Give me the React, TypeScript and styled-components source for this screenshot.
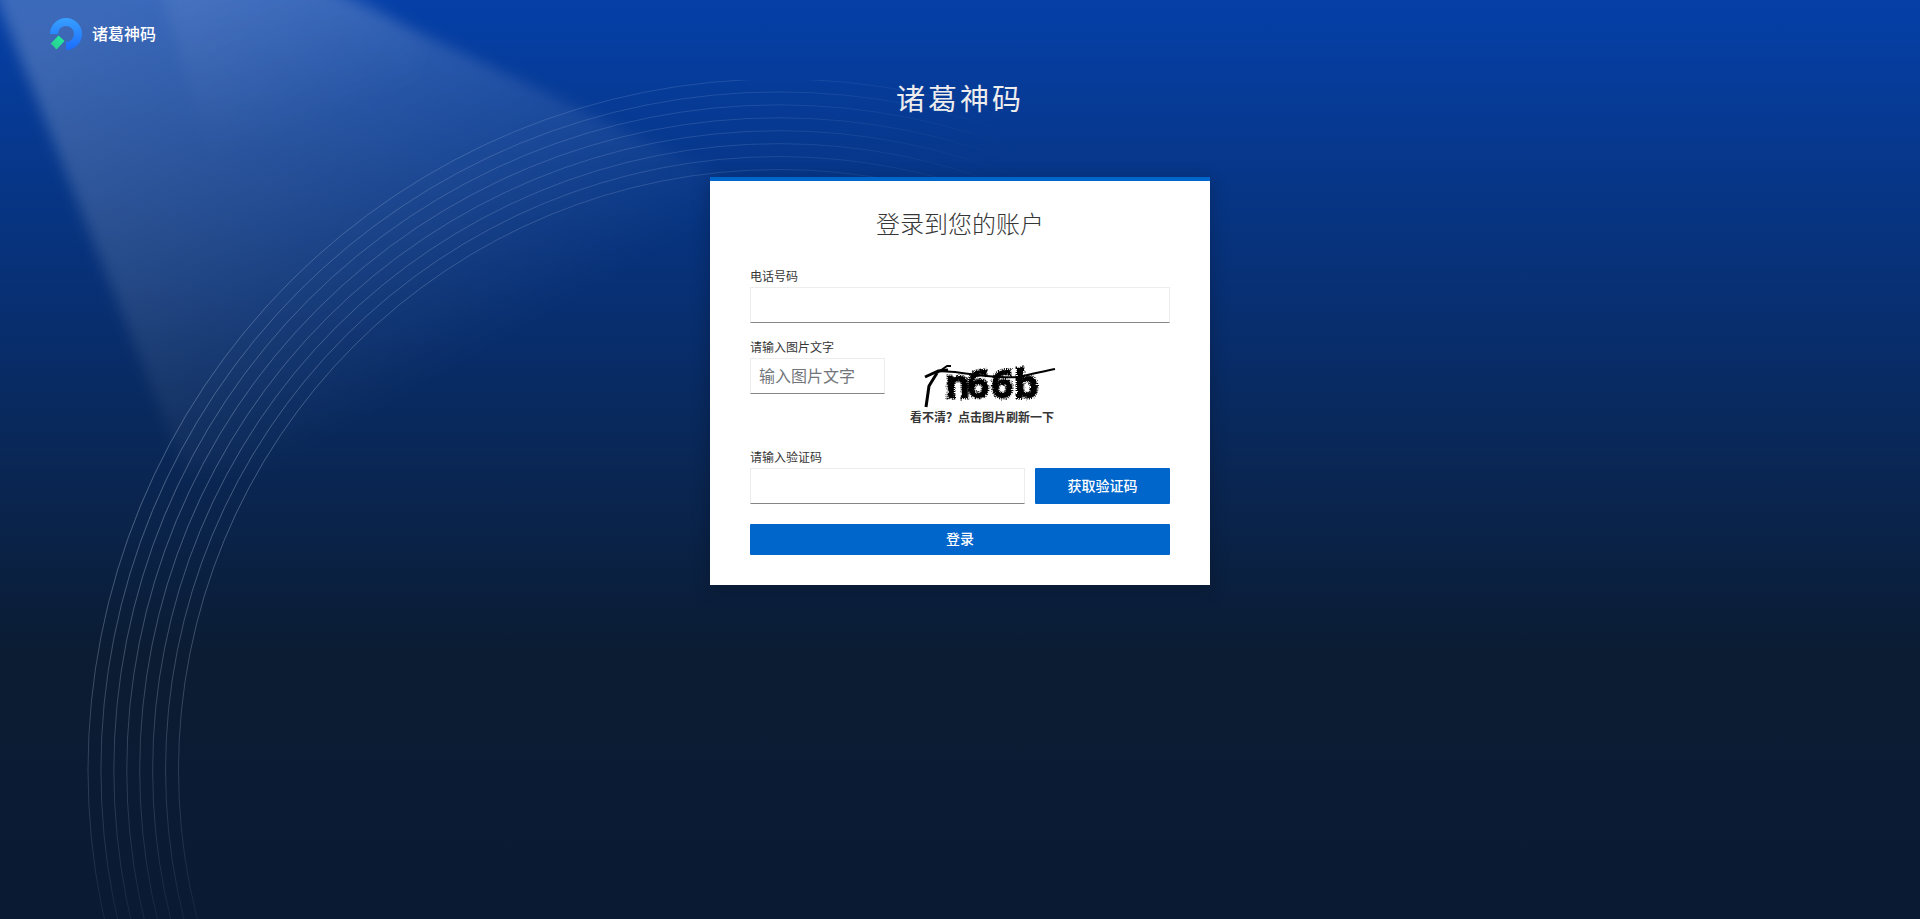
import React, { useState } from "react";
import styled, { createGlobalStyle } from "styled-components";

const GlobalStyle = createGlobalStyle`
  *, *::before, *::after { box-sizing: border-box; }
  html { height: 100%; }
  body {
    margin: 0;
    height: 100%;
    background: #0a1a33;
    color: #363636;
    font-family: "Open Sans", "Noto Sans CJK SC", sans-serif;
    font-size: 12px;
    line-height: 20px;
  }
  #root { height: 100%; }
`;

const Page = styled.div`
  position: relative;
  isolation: isolate;
  overflow: hidden;
  min-height: 100%;
  background: linear-gradient(180deg, #0540a8 0%, #0b1c33 71%, #0a1a33 100%);
`;

const Backdrop = styled.svg`
  position: absolute;
  top: 0;
  left: 0;
  z-index: -1;
  pointer-events: none;
`;

const Brand = styled.div`
  position: absolute;
  top: 18px;
  left: 50px;
  display: flex;
  align-items: center;
  gap: 10px;
  color: #fff;
  font-size: 16px;
  font-weight: 500;
  line-height: 32px;
`;

const Header = styled.header`
  padding: 80px 10px 59px;
  text-align: center;
`;

const SiteName = styled.h1`
  margin: 0;
  color: #ededed;
  font-size: 29px;
  font-weight: 400;
  line-height: 38px;
  letter-spacing: 3px;
`;

const Card = styled.main`
  width: 500px;
  max-width: 100%;
  margin: 0 auto;
  padding: 20px 40px 30px;
  border-top: 4px solid #06c;
  background: #fff;
  box-shadow: 0 4px 16px 2px rgba(3, 3, 3, 0.2);
`;

const CardTitle = styled.h2`
  margin: 0 0 20px;
  font-size: 24px;
  font-weight: 300;
  line-height: 46px;
  text-align: center;
`;

const Form = styled.form`
  display: flex;
  flex-direction: column;
`;

const Field = styled.div<{ $gap: number }>`
  display: flex;
  flex-direction: column;
  margin-bottom: ${(p) => p.$gap}px;
`;

const Label = styled.label`
  line-height: 20px;
`;

const Row = styled.div<{ $gap: number }>`
  display: flex;
  align-items: flex-start;
  gap: ${(p) => p.$gap}px;
`;

const TextInput = styled.input<{ $width?: string }>`
  width: ${(p) => p.$width ?? "100%"};
  flex: ${(p) => (p.$width ? "none" : "1 1 auto")};
  min-width: 0;
  height: 36px;
  padding: 0 8px;
  border: 1px solid #ededed;
  border-bottom-color: #868686;
  border-radius: 0;
  background: #fff;
  color: #151515;
  font-family: inherit;
  font-size: 16px;
  outline: none;

  &::placeholder {
    color: #72767b;
    opacity: 1;
  }
`;

const Captcha = styled.button`
  display: flex;
  flex-direction: column;
  align-items: flex-start;
  padding: 0;
  border: 0;
  background: none;
  color: inherit;
  font-family: inherit;
  font-size: 12px;
  font-weight: 600;
  line-height: 18px;
  cursor: pointer;
`;

const CaptchaImage = styled.svg`
  display: block;
`;

const Button = styled.button<{ $width?: string; $height: number }>`
  flex: none;
  width: ${(p) => p.$width ?? "100%"};
  height: ${(p) => p.$height}px;
  padding: 0 0 1px;
  border: 0;
  border-radius: 1px;
  background: #06c;
  color: #fff;
  font-family: inherit;
  font-size: 14px;
  font-weight: 500;
  line-height: 20px;
  cursor: pointer;
`;

const RINGS = Array.from({ length: 8 }, (_, i) => 600.5 + i * 12.93);

function Background() {
  return (
    <Backdrop width="1120" height="920" viewBox="0 0 1120 920" aria-hidden="true">
      <defs>
        <linearGradient id="beam" gradientUnits="userSpaceOnUse" x1="160" y1="-20" x2="400" y2="400">
          <stop offset="0" stopColor="#fff" stopOpacity="0.22" />
          <stop offset="0.5" stopColor="#fff" stopOpacity="0.12" />
          <stop offset="1" stopColor="#fff" stopOpacity="0" />
        </linearGradient>
        <linearGradient id="beamInner" gradientUnits="userSpaceOnUse" x1="220" y1="0" x2="270" y2="140">
          <stop offset="0" stopColor="#fff" stopOpacity="0.06" />
          <stop offset="1" stopColor="#fff" stopOpacity="0" />
        </linearGradient>
        <filter id="soft" x="-10%" y="-10%" width="120%" height="120%">
          <feGaussianBlur stdDeviation="7" />
        </filter>
        <linearGradient id="ringFadeX" gradientUnits="userSpaceOnUse" x1="90" y1="0" x2="1030" y2="0">
          <stop offset="0" stopColor="#fff" stopOpacity="1" />
          <stop offset="0.7" stopColor="#fff" stopOpacity="0.5" />
          <stop offset="1" stopColor="#fff" stopOpacity="0" />
        </linearGradient>
        <linearGradient id="ringStroke" gradientUnits="userSpaceOnUse" x1="0" y1="80" x2="0" y2="940">
          <stop offset="0" stopColor="#a9c2ea" stopOpacity="0.3" />
          <stop offset="0.5" stopColor="#b4c4dd" stopOpacity="0.4" />
          <stop offset="0.75" stopColor="#b4c4dd" stopOpacity="0.26" />
          <stop offset="1" stopColor="#b4c4dd" stopOpacity="0.06" />
        </linearGradient>
        <mask id="ringMask" maskUnits="userSpaceOnUse" x="0" y="80" width="1120" height="840">
          <rect x="0" y="80" width="1120" height="840" fill="url(#ringFadeX)" />
        </mask>
      </defs>
      <path d="M-15 -30 L185 470 L560 470 L790 210 L290 -30 Z" fill="url(#beam)" filter="url(#soft)" />
      <path d="M155 -30 L215 170 L420 170 L420 40 L340 -30 Z" fill="url(#beamInner)" filter="url(#soft)" />
      <g mask="url(#ringMask)" fill="none" stroke="url(#ringStroke)" strokeWidth="1">
        {RINGS.map((r) => (
          <circle key={r} cx="779" cy="770" r={r} />
        ))}
      </g>
    </Backdrop>
  );
}

function Logo() {
  return (
    <svg width="32" height="32" viewBox="0 0 32 32" aria-hidden="true">
      <defs>
        <linearGradient id="logoBlue" x1="0" y1="0" x2="0" y2="1">
          <stop offset="0" stopColor="#38a0ff" />
          <stop offset="1" stopColor="#1b6dff" />
        </linearGradient>
        <linearGradient id="logoGreen" x1="1" y1="0" x2="0" y2="1">
          <stop offset="0" stopColor="#20f0a0" />
          <stop offset="1" stopColor="#2cc98c" />
        </linearGradient>
      </defs>
      <path d="M0 16 A16 16 0 1 1 16 32 V24 A8 8 0 1 0 8 16 Z" fill="url(#logoBlue)" />
      <path d="M8.5 17.5 L14.5 23 L6.5 31.5 L0.8 25.5 Z" fill="url(#logoGreen)" />
    </svg>
  );
}

function CaptchaDrawing() {
  return (
    <CaptchaImage width="160" height="51" viewBox="0 0 160 51" role="img" aria-label="图片验证码">
      <defs>
        <filter id="rough" x="-10%" y="-20%" width="120%" height="140%">
          <feTurbulence type="fractalNoise" baseFrequency="0.4" numOctaves="2" seed="4" result="n" />
          <feDisplacementMap in="SourceGraphic" in2="n" scale="3" xChannelSelector="R" yChannelSelector="G" />
        </filter>
      </defs>
      <text
        x="35 57 81 104"
        y="40"
        filter="url(#rough)"
        fontFamily="'Open Sans', sans-serif"
        fontWeight="700"
        fontSize="39"
        stroke="#000"
        strokeWidth="3"
        strokeDasharray="1 1"
      >
        n66b
      </text>
      <g fill="none" stroke="#000" strokeLinejoin="round">
        <path d="M15 19 L28 13 L38 12" strokeWidth="3" />
        <path d="M27 15 L37 8 L41 8" strokeWidth="2" />
        <path d="M16 49 L19 28 L27 15" strokeWidth="3" />
        <path d="M28 13 L45 14 C72 18 92 20 107 19 C120 17 134 13 145 11" strokeWidth="2" />
      </g>
    </CaptchaImage>
  );
}

export default function App() {
  const [phone, setPhone] = useState("");
  const [picture, setPicture] = useState("");
  const [code, setCode] = useState("");

  return (
    <>
      <GlobalStyle />
      <Page>
        <Background />
        <Brand>
          <Logo />
          <span>诸葛神码</span>
        </Brand>
        <Header>
          <SiteName>诸葛神码</SiteName>
        </Header>
        <Card>
          <CardTitle>登录到您的账户</CardTitle>
          <Form onSubmit={(e) => e.preventDefault()}>
            <Field $gap={15}>
              <Label htmlFor="phone">电话号码</Label>
              <TextInput id="phone" type="tel" value={phone} onChange={(e) => setPhone(e.target.value)} />
            </Field>
            <Field $gap={21}>
              <Label htmlFor="picture">请输入图片文字</Label>
              <Row $gap={25}>
                <TextInput
                  id="picture"
                  $width="135px"
                  placeholder="输入图片文字"
                  value={picture}
                  onChange={(e) => setPicture(e.target.value)}
                />
                <Captcha type="button">
                  <CaptchaDrawing />
                  <span>看不清？点击图片刷新一下</span>
                </Captcha>
              </Row>
            </Field>
            <Field $gap={20}>
              <Label htmlFor="code">请输入验证码</Label>
              <Row $gap={10}>
                <TextInput id="code" value={code} onChange={(e) => setCode(e.target.value)} />
                <Button type="button" $width="135px" $height={36}>
                  获取验证码
                </Button>
              </Row>
            </Field>
            <Button type="submit" $height={31}>
              登录
            </Button>
          </Form>
        </Card>
      </Page>
    </>
  );
}
